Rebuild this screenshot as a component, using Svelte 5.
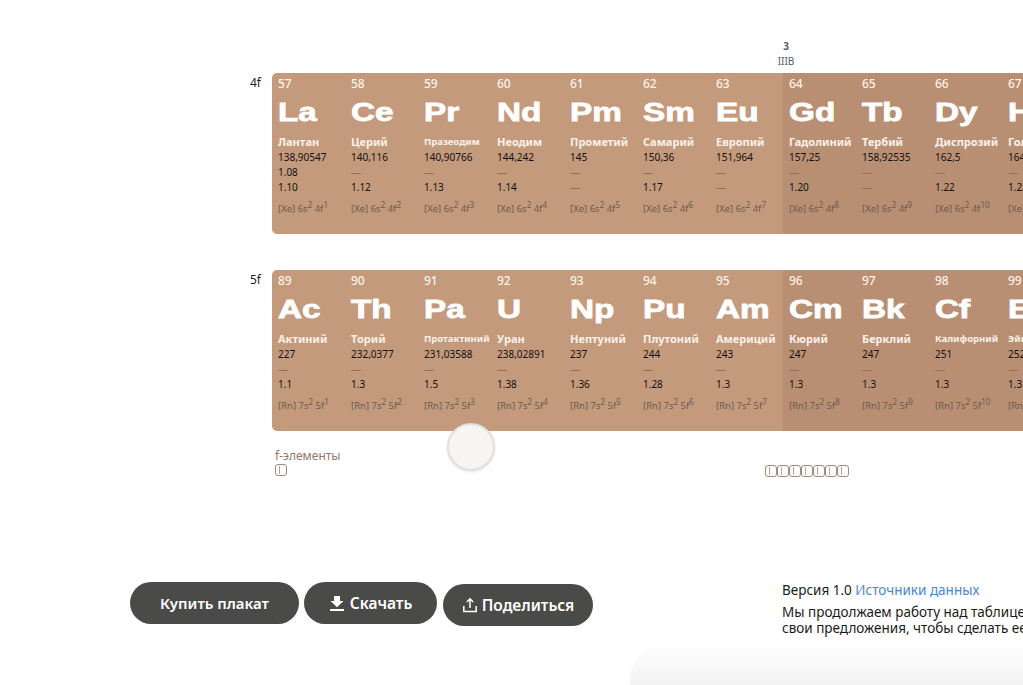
<script>
	const lanth = [
		[57, 'La', 'Лантан', '138,90547', '1.08', '1.10', '[Xe] 6s', '4f', 1],
		[58, 'Ce', 'Церий', '140,116', '—', '1.12', '[Xe] 6s', '4f', 2],
		[59, 'Pr', 'Празеодим', '140,90766', '—', '1.13', '[Xe] 6s', '4f', 3],
		[60, 'Nd', 'Неодим', '144,242', '—', '1.14', '[Xe] 6s', '4f', 4],
		[61, 'Pm', 'Прометий', '145', '—', '—', '[Xe] 6s', '4f', 5],
		[62, 'Sm', 'Самарий', '150,36', '—', '1.17', '[Xe] 6s', '4f', 6],
		[63, 'Eu', 'Европий', '151,964', '—', '—', '[Xe] 6s', '4f', 7],
		[64, 'Gd', 'Гадолиний', '157,25', '—', '1.20', '[Xe] 6s', '4f', 8],
		[65, 'Tb', 'Тербий', '158,92535', '—', '—', '[Xe] 6s', '4f', 9],
		[66, 'Dy', 'Диспрозий', '162,5', '—', '1.22', '[Xe] 6s', '4f', 10],
		[67, 'Ho', 'Гольмий', '164,93033', '—', '1.23', '[Xe] 6s', '4f', 11]
	];
	const actin = [
		[89, 'Ac', 'Актиний', '227', '—', '1.1', '[Rn] 7s', '5f', 1],
		[90, 'Th', 'Торий', '232,0377', '—', '1.3', '[Rn] 7s', '5f', 2],
		[91, 'Pa', 'Протактиний', '231,03588', '—', '1.5', '[Rn] 7s', '5f', 3],
		[92, 'U', 'Уран', '238,02891', '—', '1.38', '[Rn] 7s', '5f', 4],
		[93, 'Np', 'Нептуний', '237', '—', '1.36', '[Rn] 7s', '5f', 5],
		[94, 'Pu', 'Плутоний', '244', '—', '1.28', '[Rn] 7s', '5f', 6],
		[95, 'Am', 'Америций', '243', '—', '1.3', '[Rn] 7s', '5f', 7],
		[96, 'Cm', 'Кюрий', '247', '—', '1.3', '[Rn] 7s', '5f', 8],
		[97, 'Bk', 'Берклий', '247', '—', '1.3', '[Rn] 7s', '5f', 9],
		[98, 'Cf', 'Калифорний', '251', '—', '1.3', '[Rn] 7s', '5f', 10],
		[99, 'Es', 'Эйнштейний', '252', '—', '1.3', '[Rn] 7s', '5f', 11]
	];
	const rows = [
		{ label: '4f', items: lanth },
		{ label: '5f', items: actin }
	];
	const tiny = ['Празеодим', 'Протактиний', 'Калифорний', 'Эйнштейний'];
</script>

<div class="page">
	<div class="group">
		<b>3</b>
		<span>IIIB</span>
	</div>

	{#each rows as row}
		<section class="row">
			<div class="shell">{row.label}</div>
			<div class="panel">
				<div class="shade"></div>
				{#each row.items as el}
					<div class="cell">
						<div class="num">{el[0]}</div>
						<div class="sym">{el[1]}</div>
						<div class="name" class:tiny={tiny.includes(el[2])}>{el[2]}</div>
						<div class="val">{el[3]}</div>
						<div class="val" class:dash={el[4] === '—'}>{el[4]}</div>
						<div class="val" class:dash={el[5] === '—'}>{el[5]}</div>
						<div class="conf">{el[6]}<sup>2</sup> {el[7]}<sup>{el[8]}</sup></div>
					</div>
				{/each}
			</div>
		</section>
	{/each}

	<div class="legend">
		<div class="legend-left">
			<div class="legend-title">f-элементы</div>
			<i class="box"></i>
		</div>
		<div class="legend-right">
			{#each Array(7) as _}
				<i class="box"></i>
			{/each}
		</div>
	</div>

	<footer>
		<div class="buttons">
			<button class="buy">Купить плакат</button>
			<button class="save">
				<svg width="16" height="16" viewBox="0 0 16 16"><path d="M5 1h6v5h3.500L8 12.200 1.500 6H5z M1 14h14v2H1z" fill="#fff"/></svg>
				Скачать
			</button>
			<button class="share">
				<svg width="16" height="16" viewBox="0 0 16 16" fill="none" stroke="#fff" stroke-width="1.500"><path d="M8 11V2M4.800 5 8 1.800 11.200 5M1.800 9v5.500h12.400V9"/></svg>
				Поделиться
			</button>
		</div>
		<div class="about">
			<div class="version">Версия 1.0 <a href="#sources">Источники данных</a></div>
			<p>Мы продолжаем работу над таблицей. Присылайте<br />свои предложения, чтобы сделать ее лучше</p>
		</div>
	</footer>

	<div class="touch"></div>
	<div class="fade"></div>
</div>

<style>
	:global(body) {
		margin: 0;
		background: #fff;
		overflow: hidden;
	}
	.page {
		position: relative;
		width: 1023px;
		height: 685px;
		overflow: hidden;
		box-sizing: border-box;
		padding: 39px 0 0 250px;
		font-family: 'Noto Sans', 'Open Sans', sans-serif;
		color: #111;
	}
	.group {
		display: flex;
		flex-direction: column;
		align-items: center;
		width: 30px;
		margin-left: 521px;
		height: 34px;
		font-size: 10px;
		line-height: 15px;
		color: #4f5d6d;
	}
	.row {
		display: flex;
		margin-bottom: 36px;
	}
	.shell {
		width: 22px;
		flex: none;
		padding-top: 1px;
		font-size: 12px;
		line-height: 18px;
		color: #222;
	}
	.panel {
		position: relative;
		display: grid;
		grid-template-columns: repeat(14, 73px);
		flex: none;
		width: 1022px;
		height: 161px;
		border-radius: 5px 0 0 5px;
		background: #c49a7c;
	}
	.shade {
		position: absolute;
		top: 0;
		bottom: 0;
		left: 511px;
		right: 0;
		background: #b98f74;
	}
	.cell {
		position: relative;
		padding: 3px 0 0 6px;
		white-space: nowrap;
	}
	.num {
		font-size: 12px;
		font-weight: 500;
		line-height: 16px;
		color: #fdf3e8;
	}
	.sym {
		margin-top: 4px;
		height: 32px;
		font-family: 'Liberation Sans', sans-serif;
		font-size: 26px;
		font-weight: 700;
		line-height: 32px;
		color: #fff;
		-webkit-text-stroke: 0.8px #fff;
		transform: scaleX(1.28);
		transform-origin: left center;
	}
	.name {
		margin-top: 5px;
		height: 17px;
		font-size: 11px;
		font-weight: 700;
		line-height: 17px;
		color: #fbf1e8;
	}
	.name.tiny {
		font-size: 9.500px;
	}
	.val {
		font-size: 10px;
		line-height: 15px;
		color: #111;
	}
	.val.dash {
		color: #8d6f5c;
	}
	.conf {
		margin-top: 6px;
		font-size: 9.500px;
		line-height: 15px;
		color: #6a5a50;
	}
	.conf sup {
		font-size: 8px;
		line-height: 0;
	}
	.legend {
		display: flex;
		margin: -19px 0 0 25px;
		height: 29px;
	}
	.legend-left {
		width: 490px;
	}
	.legend-title {
		font-size: 12px;
		line-height: 16px;
		color: #8f7867;
	}
	.legend-right {
		display: flex;
		align-self: flex-end;
	}
	.box {
		display: block;
		box-sizing: border-box;
		width: 12px;
		height: 12px;
		border: 1px solid #a08a7c;
		border-radius: 3px;
		position: relative;
	}
	.box::before {
		content: '';
		position: absolute;
		left: 3px;
		top: 1px;
		bottom: 1px;
		width: 1px;
		background: #b5a498;
	}
	footer {
		display: flex;
		justify-content: space-between;
		margin: 105px 0 0 -120px;
		width: 893px;
	}
	.buttons {
		display: flex;
		gap: 5px;
		align-items: flex-start;
	}
	button {
		display: flex;
		align-items: center;
		justify-content: center;
		gap: 5px;
		height: 42px;
		border: 0;
		border-radius: 21px;
		background: #4a4a48;
		color: #fff;
		font-family: 'Noto Sans', sans-serif;
		font-size: 15.500px;
		font-weight: 600;
	}
	.buy {
		width: 169px;
		font-size: 15px;
	}
	.save {
		width: 133px;
	}
	.share {
		width: 150px;
		margin: 2px 0 0 1px;
		gap: 4px;
	}
	.about {
		width: 241px;
		flex: none;
		white-space: nowrap;
		font-size: 13.500px;
		color: #1b1b1b;
	}
	.version {
		line-height: 16px;
	}
	.version a {
		color: #4a86d0;
		text-decoration: none;
	}
	.about p {
		margin: 6px 0 0;
		line-height: 16px;
	}
	.touch {
		position: absolute;
		left: 447px;
		top: 423px;
		width: 48px;
		height: 48px;
		box-sizing: border-box;
		border-radius: 50%;
		border: 2px solid #e2dfdc;
		background: #f6f5f4;
		box-shadow: 0 1px 3px rgba(0, 0, 0, 0.1);
	}
	.fade {
		position: absolute;
		left: 630px;
		right: 0;
		bottom: 0;
		height: 45px;
		background: linear-gradient(#fff, #f3f3f3);
		border-radius: 40px 0 0 0;
	}
</style>
